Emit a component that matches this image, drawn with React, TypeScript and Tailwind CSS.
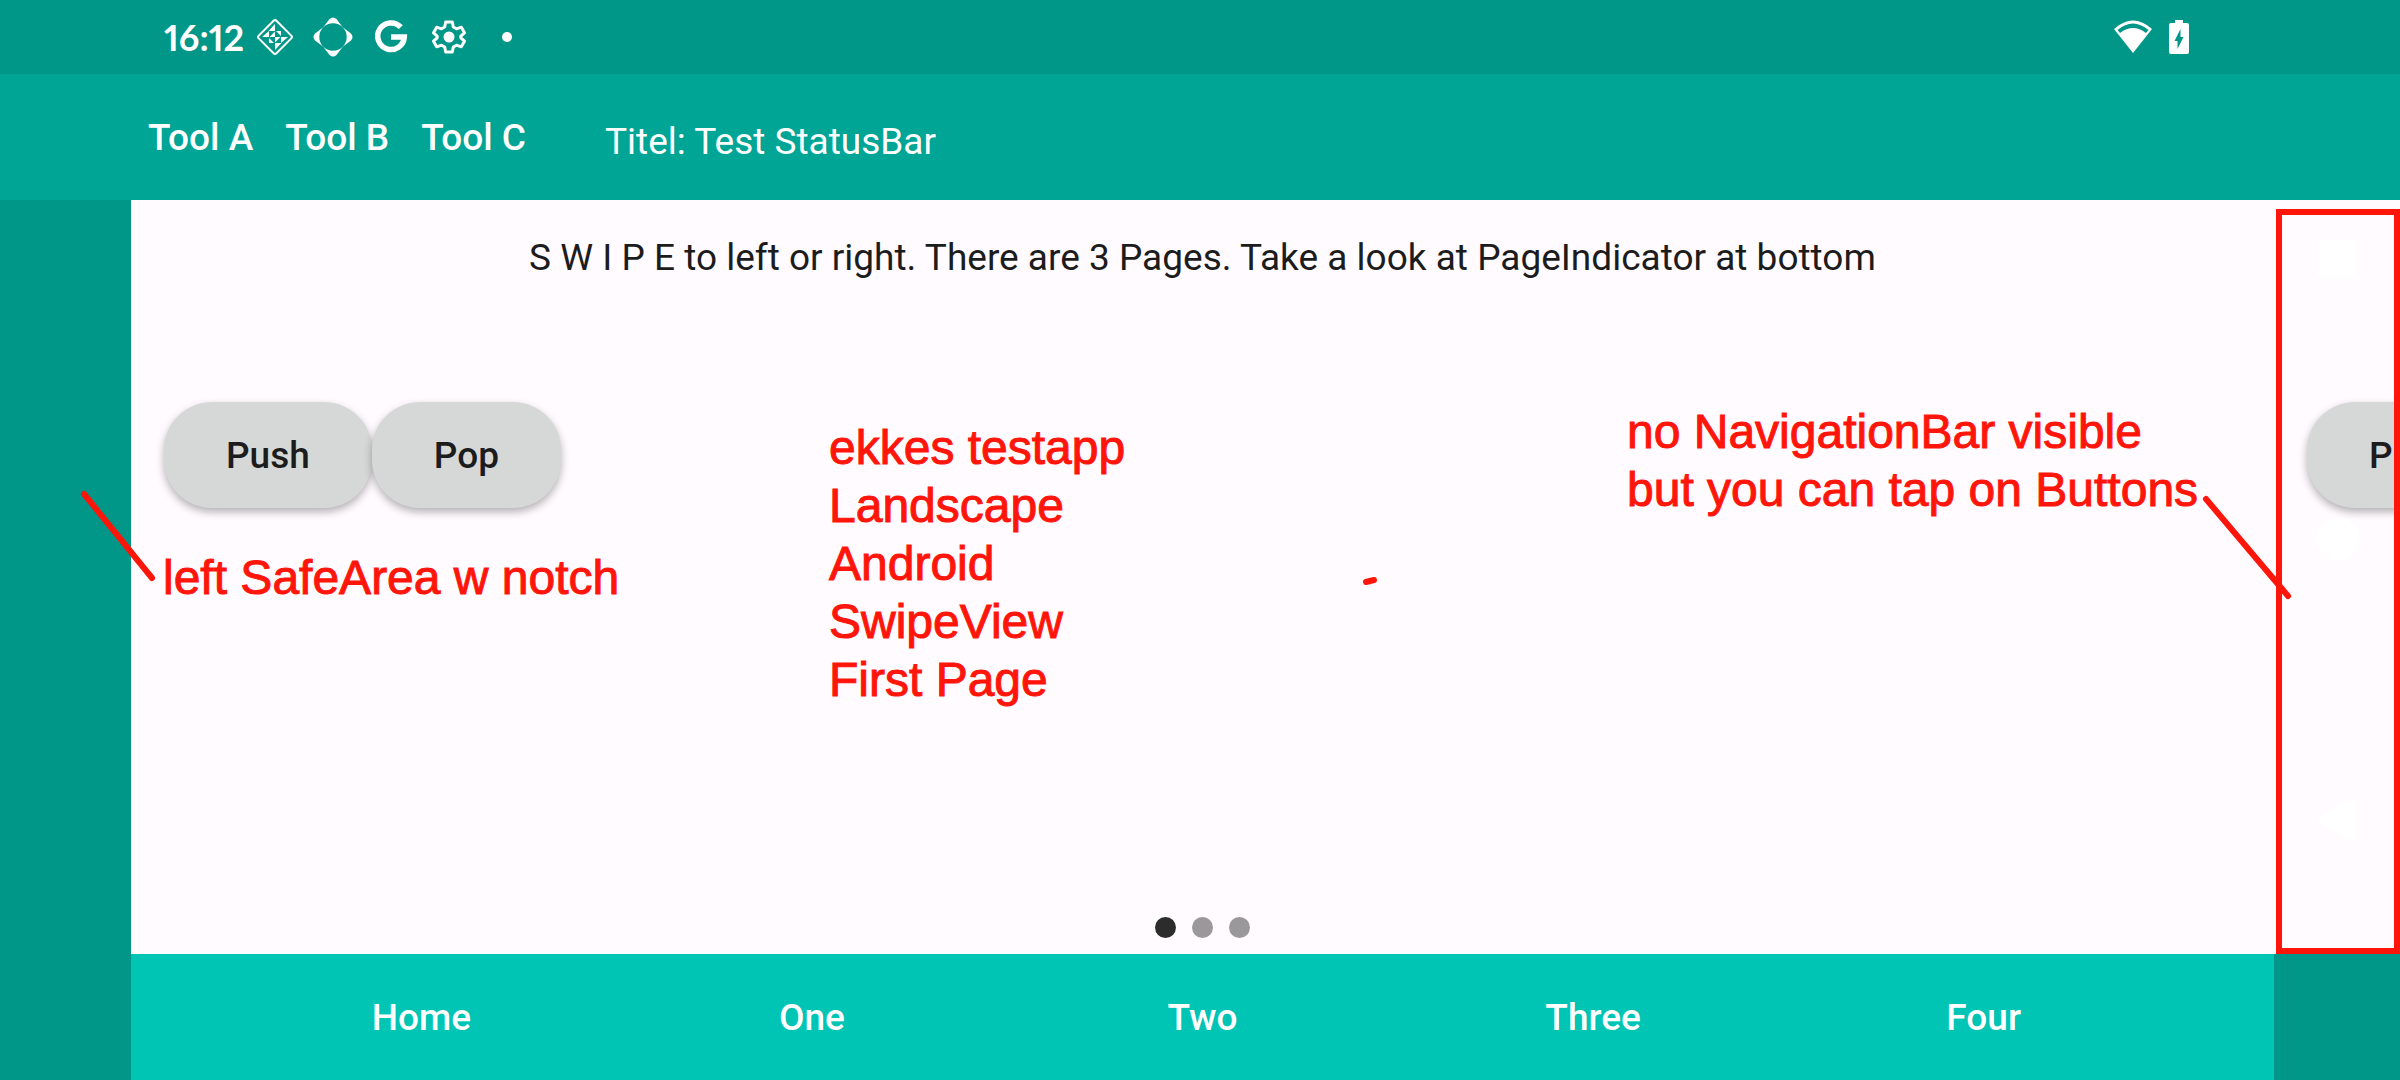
import { ReactNode, useState } from "react"

type ToolButtonProps = {
    label: string
}

type PillButtonProps = {
    label: string
}

type NoteProps = {
    lines: string[],
    className: string
}

const tools = ["Tool A", "Tool B", "Tool C"]
const tabs = ["Home", "One", "Two", "Three", "Four"]
const pages = ["First Page", "Second Page", "Third Page"]

function StatusIcon({children}: {children: ReactNode}){
    return (
        <svg viewBox="0 0 40 40" className="size-10 shrink-0" fill="none" aria-hidden="true">
            {children}
        </svg>
    )
}

function StatusBar(){
    return (
        <div className="flex h-[74px] items-center justify-between bg-[#009688] pl-[164px] pr-[211px] text-white">
            <div className="flex items-center">
                <span className="w-[91px] font-['Lato',sans-serif] text-[36px] leading-[40px] font-bold whitespace-nowrap proportional-nums">16:12</span>
                {/* diamond with pinwheel */}
                <StatusIcon>
                    <rect x="7.5" y="7.5" width="25" height="25" rx="2" transform="rotate(45 20 20)" stroke="white" strokeWidth="2"/>
                    <g fill="white">
                        <path d="M20 7v7h-6.500z"/>
                        <path d="M20 33v-7h6.500z"/>
                        <path d="M7 20h7v-6z"/>
                        <path d="M33 20h-7v6z"/>
                        <path d="M14.500 20L20 14.500V20z"/>
                        <path d="M25.500 20L20 25.500V20z"/>
                        <path d="M21 14h5v5z"/>
                        <path d="M19 26h-5v-5z"/>
                    </g>
                </StatusIcon>
                {/* four pointed badge with a round hole */}
                <div className="ml-[18px] flex">
                    <StatusIcon>
                        <path d="M16.500 2Q20-1 23.500 2L29.700 10.300 38 16.500Q41 20 38 23.500L29.700 29.700 23.500 38Q20 41 16.500 38L10.300 29.700 2 23.500Q-1 20 2 16.500L10.300 10.300z" fill="white"/>
                        <circle cx="20" cy="20" r="13.700" fill="#009688"/>
                    </StatusIcon>
                </div>
                <div className="ml-[18px] flex">
                    <StatusIcon>
                        <path d="M29.800 10.200A13.300 13.300 0 1 0 33.300 20H20" stroke="white" strokeWidth="5.500"/>
                    </StatusIcon>
                </div>
                <div className="ml-[18px] flex">
                    <StatusIcon>
                        <path d="M16.700 5h6.600l1 5 3.200 1.800 4.800-1.600 3.200 5.600-3.700 3.400v1.600l3.700 3.400-3.200 5.600-4.800-1.600-3.200 1.800-1 5h-6.600l-1-5-3.200-1.800-4.800 1.600-3.200-5.600 3.700-3.400v-1.600l-3.700-3.400 3.200-5.600 4.800 1.600 3.200-1.800z" stroke="white" strokeWidth="3" strokeLinejoin="round"/>
                        <circle cx="20" cy="20" r="5.500" fill="white"/>
                    </StatusIcon>
                </div>
                <span className="ml-[33px] size-2.5 rounded-full bg-white"/>
            </div>
            <div className="flex items-center gap-4">
                <svg viewBox="0 0 40 34" className="h-[34px] w-10" aria-hidden="true">
                    <path d="M1 9Q20-8 39 9L20 33z" fill="white"/>
                    <path d="M4.500 10Q20-3 35.500 10L33 13Q20 3 7 13z" fill="#009688"/>
                </svg>
                <svg viewBox="0 0 20 34" className="h-[34px] w-5" aria-hidden="true">
                    <path d="M6 0h8v3h4q2 0 2 2v27q0 2-2 2H2q-2 0-2-2V5q0-2 2-2h4z" fill="white"/>
                    <path d="M11.500 9v8h3L8.500 29v-8h-3z" fill="#009688"/>
                </svg>
            </div>
        </div>
    )
}

function ToolButton({label}: ToolButtonProps){
    return <button type="button" className="h-[126px] px-4 pt-0.5 font-medium whitespace-nowrap">{label}</button>
}

function PillButton({label}: PillButtonProps){
    return (
        <button type="button" className="h-[106px] shrink-0 rounded-[48px] bg-[#d6d8d7] px-[62px] pt-0.5 font-medium text-[#1c1c1c] shadow-[0_4px_8px_rgba(0,0,0,0.3)]">
            {label}
        </button>
    )
}

function Note({lines, className}: NoteProps){
    return (
        <p className={`absolute font-['Liberation_Sans',Arial,sans-serif] text-[48px] leading-[58px] whitespace-nowrap text-[#ff150a] [-webkit-text-stroke:1px_#ff150a] ${className}`}>
            {lines.map(line => <span key={line} className="block">{line}</span>)}
        </p>
    )
}

export default function App(){

    //index of the page that is shown in the swipe area
    const [page, setPage] = useState<number>(0)

    return (
        <div className="relative flex min-h-screen flex-col overflow-hidden bg-[#009688] font-['Roboto',sans-serif] text-[37px] leading-[44px]">
            <StatusBar/>
            <header className="flex h-[126px] items-center bg-[#00a596] pl-[132px] text-white">
                <nav className="flex">
                    {tools.map(tool => <ToolButton key={tool} label={tool}/>)}
                </nav>
                <h1 className="ml-[63px] pt-2.5">Titel: Test StatusBar</h1>
            </header>

            <div className="flex grow">
                <div className="w-[131px] shrink-0"/>
                <main className="flex min-w-0 grow flex-col bg-[#fffbff]">
                    <p className="mt-9 text-center text-[#1c1c1c]">
                        S W I P E to left or right. There are 3 Pages. Take a look at PageIndicator at bottom
                    </p>
                    <div className="mt-[122px] flex px-[33px]">
                        <PillButton label="Push"/>
                        <PillButton label="Pop"/>
                    </div>
                    <div className="mt-auto mb-4 flex justify-center gap-4">
                        {pages.map((name, i) =>
                            <button
                                type="button"
                                key={name}
                                aria-label={name}
                                onClick={() => setPage(i)}
                                className={`size-[21px] rounded-full ${page === i ? "bg-[#2c2c2c]" : "bg-[#9a989a]"}`}
                            />)}
                    </div>
                </main>

                {/* start of the next page, below the system buttons */}
                <aside className="relative w-[126px] shrink-0 overflow-hidden bg-[#fffbff]">
                    <div className="flex pt-[202px] pl-[33px]">
                        <PillButton label="Push"/>
                    </div>
                    <svg viewBox="0 0 126 754" className="absolute inset-0 h-full w-full" fill="white" aria-hidden="true">
                        <rect x="44" y="39" width="39" height="39" rx="4"/>
                        <circle cx="64" cy="339" r="22"/>
                        <path d="M46 617L76 599Q83 597 83 603V637Q83 643 76 642L46 624Q42 621 46 617z"/>
                    </svg>
                    <div className="absolute inset-x-0 top-[9px] bottom-0 ml-0.5 border-6 border-[#ff150a]"/>
                </aside>
            </div>

            <footer className="flex h-[126px] pl-[131px] pr-[126px]">
                <nav className="flex grow justify-center bg-[#00c4b4] px-[95px] text-white">
                    {tabs.map(tab => <button type="button" key={tab} className="basis-0 grow pt-0.5 font-medium">{tab}</button>)}
                </nav>
            </footer>

            <Note lines={["left SafeArea w notch"]} className="left-[163px] top-[549px]"/>
            <Note lines={["ekkes testapp", "Landscape", "Android", "SwipeView", "First Page"]} className="left-[829px] top-[419px]"/>
            <Note lines={["no NavigationBar visible", "but you can tap on Buttons"]} className="left-[1627px] top-[403px]"/>
            <svg viewBox="0 0 2400 1080" className="pointer-events-none absolute inset-0 h-full w-full" stroke="#ff150a" strokeWidth="6" strokeLinecap="round" aria-hidden="true">
                <path d="M84 494L152 578"/>
                <path d="M2206 499L2288 596"/>
                <path d="M1366 582L1374 580"/>
            </svg>
        </div>
    )
}
